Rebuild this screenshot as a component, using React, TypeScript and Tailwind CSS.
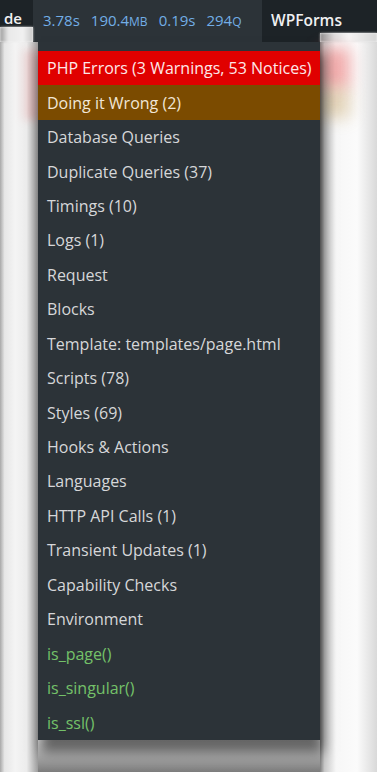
const items: { label: string; tone?: 'error' | 'warn' | 'cond' }[] = [
  { label: 'PHP Errors (3 Warnings, 53 Notices)', tone: 'error' },
  { label: 'Doing it Wrong (2)', tone: 'warn' },
  { label: 'Database Queries' },
  { label: 'Duplicate Queries (37)' },
  { label: 'Timings (10)' },
  { label: 'Logs (1)' },
  { label: 'Request' },
  { label: 'Blocks' },
  { label: 'Template: templates/page.html' },
  { label: 'Scripts (78)' },
  { label: 'Styles (69)' },
  { label: 'Hooks & Actions' },
  { label: 'Languages' },
  { label: 'HTTP API Calls (1)' },
  { label: 'Transient Updates (1)' },
  { label: 'Capability Checks' },
  { label: 'Environment' },
  { label: 'is_page()', tone: 'cond' },
  { label: 'is_singular()', tone: 'cond' },
  { label: 'is_ssl()', tone: 'cond' },
];

function rowClass(tone?: string) {
  if (tone === 'error') return 'bg-[#e00000] text-[#fde8e8]';
  if (tone === 'warn') return 'bg-[#7b4b00] text-[#f1e6d6]';
  if (tone === 'cond') return 'text-[#74c169]';
  return 'text-[#d6d7d9]';
}

export default function App() {
  return (
    <div className="relative flex h-[772px] w-[377px] flex-col overflow-hidden bg-[linear-gradient(to_bottom,#f2f2f2_0,#f2f2f2_95%,#b5b5b5_97.5%,#7c7c7c_100%)] font-['Open_Sans',sans-serif]">
      {/* admin bar */}
      <div className="flex h-[42px] shrink-0">
        <div className="flex w-[33px] flex-col">
          <div className="flex h-[27px] items-end bg-[#1d2327] pb-[1px] pl-[4px] text-[15px] font-semibold leading-none text-[#f0f0f1]">
            de
          </div>
          <div className="flex-1 bg-[linear-gradient(to_right,#9a9a9a_0,#e9e9e9_25%,#f1f1f1_70%,#c9c9c9_100%)] blur-[1px]" />
        </div>
        <div className="flex w-[229px] items-start gap-[11px] bg-[#2c3338] pl-[10px] pt-[10px] text-[15px] leading-[20px] text-[#72aee6]">
          <span>3.78s</span>
          <span>
            190.4<span className="text-[12px]">MB</span>
          </span>
          <span>0.19s</span>
          <span>
            294<span className="text-[12px]">Q</span>
          </span>
        </div>
        <div className="flex flex-1 flex-col">
          <div className="flex h-[33px] items-start bg-[#1d2327] pl-[9px] pt-[10px] text-[15.5px] font-semibold leading-[20px] text-[#f0f0f1]">
            WPForms
          </div>
          <div className="flex flex-1">
            <div className="w-[58px] bg-[#1d2327]" />
            <div className="flex-1 bg-[linear-gradient(to_right,#8f8f8f_0,#dedede_25%,#f6f6f6_50%,#d5d5d5_100%)] blur-[1px]" />
          </div>
        </div>
      </div>

      {/* body */}
      <div className="flex flex-1">
        <div className="w-[38px] bg-[linear-gradient(to_right,#a8a8a8_0,#e6e6e6_12%,#f4f4f4_40%,#ececec_70%,#9d9d9d_100%)]">
          <div className="mt-[8px] h-[70px] bg-[linear-gradient(to_right,transparent_50%,rgba(230,90,90,0.35)_100%)] blur-[4px]" />
        </div>
        <div className="flex w-[282px] flex-col">
          <div className="z-10 bg-[#2c3338] pt-[9px] shadow-[3px_12px_12px_rgba(0,0,0,0.55)]">
            {items.map((it) => (
              <div
                key={it.label}
                className={`flex h-[34.45px] items-center whitespace-nowrap pl-[9px] text-[16px] leading-none ${rowClass(it.tone)}`}
              >
                {it.label}
              </div>
            ))}
          </div>
        </div>
        <div className="flex flex-1 flex-col bg-[linear-gradient(to_right,#7f7f7f_0,#c8c8c8_8%,#f7f7f7_28%,#fbfbfb_65%,#d9d9d9_100%)]">
          <div className="mt-[6px] h-[40px] w-[30px] bg-[rgba(235,80,80,0.45)] blur-[8px]" />
          <div className="h-[30px] w-[30px] bg-[rgba(180,130,40,0.3)] blur-[8px]" />
        </div>
      </div>
    </div>
  );
}
